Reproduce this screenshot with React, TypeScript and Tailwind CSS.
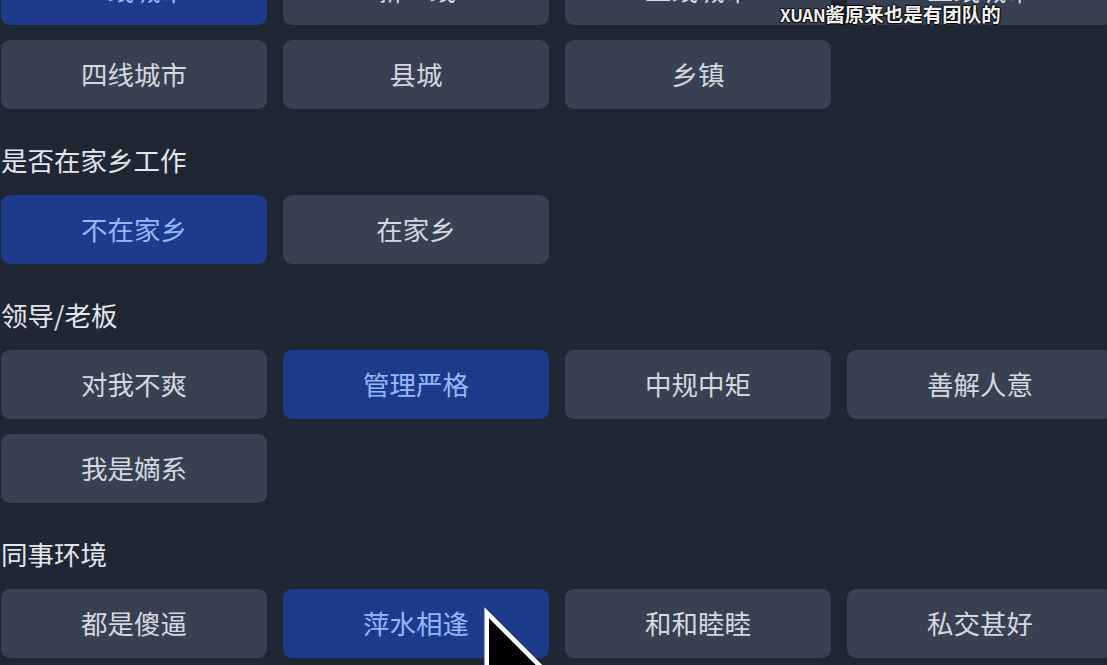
import React from "react";

type Group = {
  title?: string;
  options: string[];
  selected: string;
};

const groups: Group[] = [
  {
    options: ["一线城市", "新一线", "二线城市", "三线城市", "四线城市", "县城", "乡镇"],
    selected: "一线城市",
  },
  { title: "是否在家乡工作", options: ["不在家乡", "在家乡"], selected: "不在家乡" },
  {
    title: "领导/老板",
    options: ["对我不爽", "管理严格", "中规中矩", "善解人意", "我是嫡系"],
    selected: "管理严格",
  },
  {
    title: "同事环境",
    options: ["都是傻逼", "萍水相逢", "和和睦睦", "私交甚好"],
    selected: "萍水相逢",
  },
];

const font = { fontFamily: '"Noto Sans CJK SC", "Noto Sans", sans-serif' };

function Option({ label, active }: { label: string; active: boolean }) {
  return (
    <button
      className={
        "h-[69px] rounded-[9px] text-[26.5px] leading-none flex items-center justify-center " +
        (active ? "bg-[#1e3a8a] text-[#93b9fb]" : "bg-[#374151] text-[#d4d8df]")
      }
    >
      {label}
    </button>
  );
}

function Cursor() {
  return (
    <svg
      className="absolute left-[481px] top-[607px] pointer-events-none"
      width="80"
      height="120"
      viewBox="-1 -1 14 21"
    >
      <path
        d="M0 0 L0 16 L4 12 L7 19 L9 18 L6 11 L11 11 Z"
        fill="#000"
        stroke="#fff"
        strokeWidth="0.8"
        strokeLinejoin="miter"
      />
    </svg>
  );
}

export default function App() {
  return (
    <div className="relative w-[1107px] h-[665px] overflow-hidden bg-[#1f2735]" style={font}>
      <div className="-mt-[44px] ml-[1px] w-[1112px] flex flex-col">
        {groups.map((g, i) => (
          <section key={i} className="flex flex-col">
            {g.title && (
              <h2 className="mt-[34px] mb-[16px] h-[36px] leading-[34px] text-[26.5px] text-[#e3e6ea]">
                {g.title}
              </h2>
            )}
            <div className="grid grid-cols-4 gap-x-[16px] gap-y-[15px]">
              {g.options.map((o) => (
                <Option key={o} label={o} active={o === g.selected} />
              ))}
            </div>
          </section>
        ))}
      </div>

      {/* scrolling comment overlay */}
      <div
        className="absolute left-[780px] top-[3px] text-[19.5px] leading-[22px] font-bold text-[#f2f2f2] whitespace-nowrap"
        style={{
          fontFamily: '"Noto Sans CJK SC", sans-serif',
          textShadow:
            "1px 0 1px #000, -1px 0 1px #000, 0 1px 1px #000, 0 -1px 1px #000",
        }}
      >
        <span className="text-[17px] tracking-[-0.3px]">XUAN</span>酱原来也是有团队的
      </div>

      <Cursor />
    </div>
  );
}
